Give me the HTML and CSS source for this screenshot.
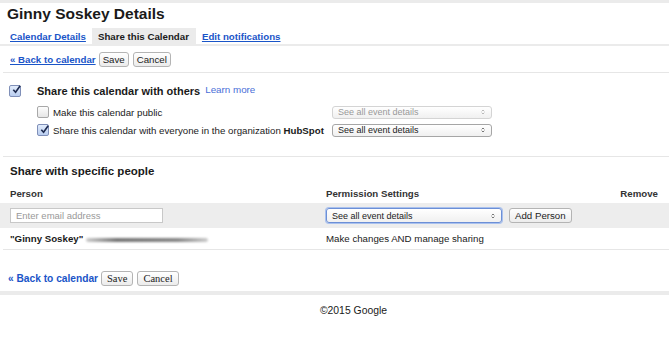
FILE: index.html
```html
<!DOCTYPE html>
<html>
<head>
    <meta charset="UTF-8">
    <title>Ginny Soskey Details</title>
    <link rel="stylesheet" href="styles.css">
</head>
<body>
<div class="topbar"></div>
<h1 class="title">Ginny Soskey Details</h1>

<div class="tabs">
    <a class="tab link" href="#">Calendar Details</a>
    <span class="tab tab-on">Share this Calendar</span>
    <a class="tab link" href="#">Edit notifications</a>
</div>

<div class="actions actions-top">
    <a class="link back" href="#">&laquo; Back to calendar</a>
    <button class="btn">Save</button>
    <button class="btn">Cancel</button>
</div>

<div class="share">
    <div class="share-main">
        <span class="check on"><svg viewBox="0 0 12 12"><path d="M2.5 6.2 L5 9 L10 2" /></svg></span>
        <span class="share-title">Share this calendar with others</span>
        <a class="learn" href="#">Learn more</a>
    </div>
    <div class="share-row">
        <span class="check"></span>
        <span class="share-label">Make this calendar public</span>
        <div class="select disabled"><span>See all event details</span><svg viewBox="0 0 6 10"><path d="M1 4 L3 2 L5 4 M1 6 L3 8 L5 6" /></svg></div>
    </div>
    <div class="share-row">
        <span class="check on"><svg viewBox="0 0 12 12"><path d="M2.5 6.2 L5 9 L10 2" /></svg></span>
        <span class="share-label">Share this calendar with everyone in the organization <b>HubSpot</b></span>
        <div class="select"><span>See all event details</span><svg viewBox="0 0 6 10"><path d="M1 4 L3 2 L5 4 M1 6 L3 8 L5 6" /></svg></div>
    </div>
</div>

<div class="people">
    <h2 class="people-title">Share with specific people</h2>
    <div class="row head">
        <span>Person</span>
        <span>Permission Settings</span>
        <span>Remove</span>
    </div>
    <div class="row add">
        <input class="email" type="text" placeholder="Enter email address">
        <div class="perm">
            <div class="select focus"><span>See all event details</span><svg viewBox="0 0 6 10"><path d="M1 4 L3 2 L5 4 M1 6 L3 8 L5 6" /></svg></div>
            <button class="btn">Add Person</button>
        </div>
        <span></span>
    </div>
    <div class="row person">
        <span class="who"><b>"Ginny Soskey"</b><span class="smudge"></span></span>
        <span>Make changes AND manage sharing</span>
        <span></span>
    </div>
</div>

<div class="actions actions-bottom">
    <a class="link back plain" href="#">&laquo; Back to calendar</a>
    <button class="btn btn-serif">Save</button>
    <button class="btn btn-serif">Cancel</button>
</div>

<div class="footbar"></div>
<div class="footer">&copy;2015 Google</div>
</body>
</html>
```

FILE: styles.css
```css
body {
    margin: 0;
    font-family: "Liberation Sans", Arial, sans-serif;
    font-size: 9.7px;
    color: #1a1a1a;
    background: #fff;
}

.topbar {
    height: 3px;
    background: #ebebeb;
}

.title {
    margin: 0 0 0 7px;
    font-size: 15.5px;
    line-height: 21px;
    font-weight: bold;
    color: #1a1a1a;
}

/* tabs */
.tabs {
    display: flex;
    margin-top: 4px;
    padding-left: 4px;
    border-bottom: 2px solid #ebebeb;
}

.tab {
    padding: 0 6px;
    height: 16px;
    line-height: 17px;
    font-weight: bold;
}

.tab-on {
    background: #ebebeb;
    color: #1a1a1a;
    padding: 0 7px 0 6px;
}

.link {
    color: #1a55c8;
    text-decoration: underline;
    font-weight: bold;
}

/* save / cancel rows */
.actions {
    display: flex;
    align-items: center;
}

.actions-top {
    margin-left: 3px;
    padding: 6px 0 5px 7px;
    border-bottom: 1px solid #e6e6e6;
}

.back {
    margin-right: 3px;
}

.plain {
    text-decoration: none;
    font-size: 10.2px;
}

.btn {
    height: 15px;
    padding: 0 3px;
    margin-right: 4px;
    font-family: "Liberation Sans", Arial, sans-serif;
    font-size: 9.7px;
    line-height: 13px;
    color: #222;
    background: linear-gradient(#fff, #ececec);
    border: 1px solid #b4b4b4;
    border-radius: 3px;
}

.btn-serif {
    font-family: "Liberation Serif", "Times New Roman", serif;
    font-size: 10.5px;
    height: 15px;
    padding: 0 5px;
}

/* share with others */
.share {
    margin-left: 3px;
    padding: 11px 0 17px;
    border-bottom: 1px solid #e6e6e6;
}

.share-main {
    display: flex;
    align-items: center;
    padding-left: 6px;
    height: 13px;
}

.share-title {
    margin-left: 16px;
    font-size: 11px;
    font-weight: bold;
}

.learn {
    margin-left: 5px;
    color: #4a6fd8;
    text-decoration: none;
    font-size: 9.8px;
    position: relative;
    top: -1px;
}

.share-row {
    display: flex;
    align-items: center;
    height: 18px;
    padding-left: 34px;
}

.share-main + .share-row {
    margin-top: 6px;
}

.share-label {
    flex: none;
    margin: 0 6px 0 4px;
    width: 273px;
    white-space: nowrap;
}

.check {
    flex: none;
    display: inline-flex;
    align-items: center;
    justify-content: center;
    width: 10px;
    height: 10px;
    border: 1px solid #a8a8a8;
    border-radius: 2px;
    background: linear-gradient(#fdfdfd, #e6e6e6);
}

.check.on {
    border-color: #7f8fb8;
    background: linear-gradient(#e2ecfb, #b9cdf0);
}

.check svg {
    width: 11px;
    height: 11px;
    fill: none;
    stroke: #1d2a4f;
    stroke-width: 1.8;
    margin-top: -2px;
    margin-right: -2px;
}

.select {
    flex: none;
    display: flex;
    align-items: center;
    justify-content: space-between;
    box-sizing: border-box;
    width: 160px;
    height: 13px;
    padding: 0 6px 0 5px;
    font-size: 9px;
    color: #222;
    background: linear-gradient(#fff, #f0f0f0);
    border: 1px solid #a6a6a6;
    border-radius: 3px;
}

.select svg {
    width: 4px;
    height: 8px;
    fill: none;
    stroke: #555;
    stroke-width: 1.2;
}

.select.disabled {
    color: #999;
    border-color: #d4d4d4;
}

.select.disabled svg {
    stroke: #aaa;
}

.select.focus {
    width: 176px;
    height: 15px;
    border-color: #6c8fd6;
    box-shadow: 0 0 0 1px #a9c1ee;
}

/* specific people */
.people-title {
    margin: 7px 0 0 10px;
    font-size: 11.5px;
    line-height: 14px;
    font-weight: bold;
}

.row {
    display: grid;
    grid-template-columns: 316px 1fr auto;
    align-items: center;
    padding: 0 11px 0 10px;
}

.head {
    height: 14px;
    margin-top: 8px;
    margin-bottom: 3px;
    font-weight: bold;
    color: #333;
}

.add {
    height: 25px;
    background: #ededed;
}

.email {
    box-sizing: border-box;
    width: 153px;
    height: 15px;
    margin: 0;
    padding: 0 5px;
    font-family: "Liberation Sans", Arial, sans-serif;
    font-size: 9.5px;
    border: 1px solid #c8c8c8;
    background: #fff;
}

.email::placeholder {
    color: #999;
}

.perm {
    display: flex;
    align-items: center;
}

.perm .btn {
    margin-left: 7px;
    height: 15px;
    padding: 0 5px;
}

.person {
    height: 21px;
    margin-left: 3px;
    padding-left: 7px;
    border-bottom: 1px solid #e6e6e6;
}

.who {
    display: flex;
    align-items: center;
}

.smudge {
    display: inline-block;
    width: 122px;
    height: 4px;
    margin-left: 3px;
    margin-top: 2px;
    border-radius: 2px;
    background: linear-gradient(90deg, #ccc, #777 25%, #888 75%, #ccc);
    filter: blur(0.8px);
}

.actions-bottom {
    padding: 20px 0 0 8px;
    height: 16px;
}

.actions-bottom .back {
    margin-right: 3px;
}

.footbar {
    height: 4px;
    margin-top: 5px;
    background: #ebebeb;
}

.footer {
    text-align: center;
    margin-top: 9px;
    font-size: 10.4px;
    line-height: 13px;
    margin-left: 38px;
}
```
